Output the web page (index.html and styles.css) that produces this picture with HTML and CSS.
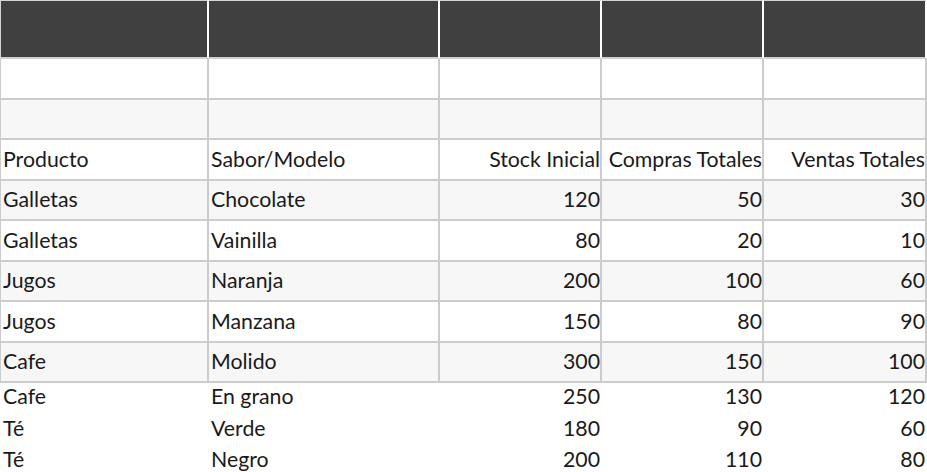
FILE: index.html
```html
<!DOCTYPE html>
<html lang="es">
<head>
<meta charset="utf-8">
<title>Inventario</title>
<link rel="stylesheet" href="styles.css">
</head>
<body>
<table class="sheet">
  <colgroup>
    <col class="c1"><col class="c2"><col class="c3"><col class="c4"><col class="c5">
  </colgroup>
  <thead>
    <tr class="head"><th></th><th></th><th></th><th></th><th></th></tr>
  </thead>
  <tbody>
    <tr class="row"><td></td><td></td><td></td><td></td><td></td></tr>
    <tr class="row alt"><td></td><td></td><td></td><td></td><td></td></tr>
    <tr class="row"><td>Producto</td><td>Sabor/Modelo</td><td class="num">Stock Inicial</td><td class="num">Compras Totales</td><td class="num">Ventas Totales</td></tr>
    <tr class="row alt"><td>Galletas</td><td>Chocolate</td><td class="num">120</td><td class="num">50</td><td class="num">30</td></tr>
    <tr class="row"><td>Galletas</td><td>Vainilla</td><td class="num">80</td><td class="num">20</td><td class="num">10</td></tr>
    <tr class="row alt"><td>Jugos</td><td>Naranja</td><td class="num">200</td><td class="num">100</td><td class="num">60</td></tr>
    <tr class="row"><td>Jugos</td><td>Manzana</td><td class="num">150</td><td class="num">80</td><td class="num">90</td></tr>
    <tr class="row alt"><td>Cafe</td><td>Molido</td><td class="num">300</td><td class="num">150</td><td class="num">100</td></tr>
    <tr class="plain"><td>Cafe</td><td>En grano</td><td class="num">250</td><td class="num">130</td><td class="num">120</td></tr>
    <tr class="plain"><td>Té</td><td>Verde</td><td class="num">180</td><td class="num">90</td><td class="num">60</td></tr>
    <tr class="plain"><td>Té</td><td>Negro</td><td class="num">200</td><td class="num">110</td><td class="num">80</td></tr>
  </tbody>
</table>
</body>
</html>
```
FILE: styles.css
```css
html, body {
  margin: 0;
  padding: 0;
  background: #ffffff;
}

.sheet {
  border-collapse: separate;
  border-spacing: 0;
  table-layout: fixed;
  width: 927px;
  font-family: Lato, "Liberation Sans", sans-serif;
  font-size: 21.3px;
  line-height: 1.2;
  color: #1a1a1a;
}

.c1 { width: 209px; }
.c2 { width: 231px; }
.c3 { width: 162px; }
.c4 { width: 162px; }
.c5 { width: 163px; }

.sheet th,
.sheet td {
  padding: 0 0 0 2px;
  white-space: nowrap;
  overflow: hidden;
  text-align: left;
  font-weight: normal;
}

.head th {
  height: 56px;
  background: #404040;
  border-top: 1px solid #d4d4d4;
  border-right: 2px solid #ffffff;
  border-bottom: 2px solid #d0d0d0;
}
.head th:first-child {
  border-left: 1px solid #d4d4d4;
}

.row td {
  height: 37.5px;
  padding-top: 1px;
  background: #ffffff;
  border-right: 2px solid #cccccc;
  border-bottom: 2px solid #cccccc;
}
.row td:first-child {
  border-left: 1px solid #cccccc;
}
.row.alt td {
  background: #f7f7f7;
}

.plain td {
  height: 28.5px;
  padding-bottom: 3px;
  border-right: 2px solid transparent;
}
.plain td:first-child {
  border-left: 1px solid transparent;
}

.sheet .num {
  text-align: right;
}
```
